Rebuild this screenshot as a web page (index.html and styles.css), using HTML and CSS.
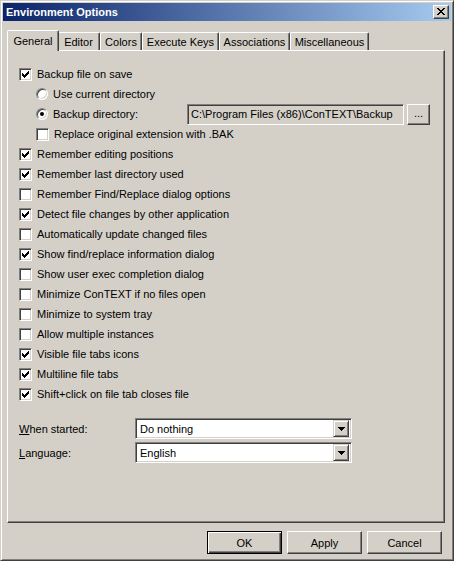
FILE: index.html
```html
<!DOCTYPE html>
<html lang="en">
<head>
    <meta charset="UTF-8">
    <title>Environment Options</title>
    <link rel="stylesheet" href="styles.css">
</head>
<body>
    <div class="window">
        <div class="titlebar">
            <span class="title">Environment Options</span>
            <span class="close-btn">
                <svg width="8" height="7" viewBox="0 0 8 7" shape-rendering="crispEdges"><path fill="#000" d="M0 0h2v1h-2z M6 0h2v1h-2z M1 1h2v1h-2z M5 1h2v1h-2z M2 2h4v1h-4z M3 3h2v1h-2z M2 4h4v1h-4z M1 5h2v1h-2z M5 5h2v1h-2z M0 6h2v1h-2z M6 6h2v1h-2z"/></svg>
            </span>
        </div>

        <div class="tabs">
            <div class="tab active">General</div>
            <div class="tab">Editor</div>
            <div class="tab">Colors</div>
            <div class="tab">Execute Keys</div>
            <div class="tab">Associations</div>
            <div class="tab">Miscellaneous</div>
        </div>

        <div class="panel">
            <div class="row"><span class="check on"></span>Backup file on save</div>
            <div class="row sub"><span class="radio"></span>Use current directory</div>
            <div class="row sub">
                <span class="radio on"></span>
                <span class="dir-label">Backup directory:</span>
                <span class="edit">C:\Program Files (x86)\ConTEXT\Backup</span>
                <span class="btn small">...</span>
            </div>
            <div class="row sub"><span class="check"></span>Replace original extension with .BAK</div>
            <div class="row"><span class="check on"></span>Remember editing positions</div>
            <div class="row"><span class="check on"></span>Remember last directory used</div>
            <div class="row"><span class="check"></span>Remember Find/Replace dialog options</div>
            <div class="row"><span class="check on"></span>Detect file changes by other application</div>
            <div class="row"><span class="check"></span>Automatically update changed files</div>
            <div class="row"><span class="check on"></span>Show find/replace information dialog</div>
            <div class="row"><span class="check"></span>Show user exec completion dialog</div>
            <div class="row"><span class="check"></span>Minimize ConTEXT if no files open</div>
            <div class="row"><span class="check"></span>Minimize to system tray</div>
            <div class="row"><span class="check"></span>Allow multiple instances</div>
            <div class="row"><span class="check on"></span>Visible file tabs icons</div>
            <div class="row"><span class="check on"></span>Multiline file tabs</div>
            <div class="row"><span class="check on"></span>Shift+click on file tab closes file</div>

            <div class="fields">
                <div class="field">
                    <span class="field-label"><u>W</u>hen started:</span>
                    <span class="combo"><span class="combo-text">Do nothing</span><span class="combo-btn"></span></span>
                </div>
                <div class="field">
                    <span class="field-label"><u>L</u>anguage:</span>
                    <span class="combo"><span class="combo-text">English</span><span class="combo-btn"></span></span>
                </div>
            </div>
        </div>

        <div class="actions">
            <span class="btn default">OK</span>
            <span class="btn">Apply</span>
            <span class="btn">Cancel</span>
        </div>
    </div>
</body>
</html>
```

FILE: styles.css
```css
body {
    margin: 0;
    background: #d4d0c8;
    font-family: "Liberation Sans", Arial, sans-serif;
    font-size: 11px;
    color: #000;
}
.window {
    width: 454px;
    height: 561px;
    box-sizing: border-box;
    border: 1px solid;
    border-color: #d4d0c8 #404040 #404040 #d4d0c8;
    box-shadow: inset 1px 1px #fff, inset -1px -1px #808080;
    padding: 2px;
    display: flex;
    flex-direction: column;
}
.titlebar {
    height: 18px;
    flex-shrink: 0;
    display: flex;
    align-items: center;
    padding: 0 2px 0 3px;
    background: linear-gradient(to right, #0a246a, #a6caf0);
}
.title {
    color: #fff;
    font-weight: bold;
}
.close-btn {
    margin-left: auto;
    width: 16px;
    height: 14px;
    box-sizing: border-box;
    border: 1px solid;
    border-color: #fff #404040 #404040 #fff;
    box-shadow: inset -1px -1px #808080;
    background: #d4d0c8;
    display: flex;
    align-items: center;
    justify-content: center;
}
.close-btn svg {
    display: block;
    margin: 0 1px 1px 0;
}

/* tab strip */
.tabs {
    display: grid;
    grid-template-columns: 48px 43px 42px 77px 71px 79px;
    height: 18px;
    margin: 11px 0 0 6px;
    flex-shrink: 0;
}
.tab {
    box-sizing: border-box;
    border: 1px solid;
    border-bottom: none;
    border-color: #fff #404040 #fff #fff;
    border-radius: 2px 2px 0 0;
    box-shadow: inset -1px 0 #808080;
    display: flex;
    align-items: center;
    justify-content: center;
    padding-top: 1px;
    background: #d4d0c8;
}
.tab.active {
    margin: -2px -2px -1px;
    padding-top: 0;
    position: relative;
    z-index: 1;
}

/* page panel */
.panel {
    height: 473px;
    flex-shrink: 0;
    box-sizing: border-box;
    margin: 0 6px 0 4px;
    border: 1px solid;
    border-color: #fff #404040 #404040 #fff;
    box-shadow: inset -1px -1px #808080;
    padding: 13px 0 0 11px;
}
.row {
    display: flex;
    align-items: center;
    height: 20px;
    white-space: nowrap;
}
.row.sub {
    padding-left: 17px;
}
.check {
    width: 13px;
    height: 13px;
    box-sizing: border-box;
    flex-shrink: 0;
    margin-right: 5px;
    border: 1px solid;
    border-color: #808080 #fff #fff #808080;
    box-shadow: inset 1px 1px #404040, inset -1px -1px #d4d0c8;
    background: #fff;
    position: relative;
}
.check.on::after {
    content: "";
    position: absolute;
    left: 2px;
    top: 2px;
    width: 7px;
    height: 7px;
    background: url("data:image/svg+xml,%3Csvg xmlns='http://www.w3.org/2000/svg' width='7' height='7' shape-rendering='crispEdges'%3E%3Cpath d='M6 0h1v1h-1z M5 1h2v1h-2z M0 2h1v1h-1z M4 2h3v1h-3z M0 3h2v1h-2z M3 3h3v1h-3z M0 4h5v1h-5z M1 5h3v1h-3z M2 6h1v1h-1z'/%3E%3C/svg%3E");
}
.radio {
    width: 12px;
    height: 12px;
    box-sizing: border-box;
    flex-shrink: 0;
    margin-right: 5px;
    border-radius: 50%;
    border: 1px solid;
    border-color: #808080 #fff #fff #808080;
    box-shadow: inset 1px 1px #404040, inset -1px -1px #d4d0c8;
    background: #fff;
    position: relative;
}
.radio.on::after {
    content: "";
    position: absolute;
    left: 3px;
    top: 3px;
    width: 4px;
    height: 4px;
    border-radius: 50%;
    background: #000;
}
.dir-label {
    width: 134px;
    flex-shrink: 0;
}
.edit {
    width: 217px;
    height: 21px;
    box-sizing: border-box;
    border: 1px solid;
    border-color: #808080 #fff #fff #808080;
    box-shadow: inset 1px 1px #404040, inset -1px -1px #d4d0c8;
    padding: 0 3px;
    display: flex;
    align-items: center;
    margin-right: 3px;
}

/* combos */
.fields {
    margin-top: 14px;
    display: flex;
    flex-direction: column;
    gap: 3px;
}
.field {
    display: flex;
    align-items: center;
}
.field-label {
    width: 116px;
}
.combo {
    width: 217px;
    height: 21px;
    box-sizing: border-box;
    border: 1px solid;
    border-color: #808080 #fff #fff #808080;
    box-shadow: inset 1px 1px #404040, inset -1px -1px #d4d0c8;
    padding: 2px;
    background: #fff;
    display: flex;
    align-items: center;
}
.combo-text {
    flex: 1;
    padding-left: 2px;
}
.combo-btn {
    width: 16px;
    height: 17px;
    box-sizing: border-box;
    border: 1px solid;
    border-color: #d4d0c8 #404040 #404040 #d4d0c8;
    box-shadow: inset 1px 1px #fff, inset -1px -1px #808080;
    background: #d4d0c8 url("data:image/svg+xml,%3Csvg xmlns='http://www.w3.org/2000/svg' width='7' height='4' shape-rendering='crispEdges'%3E%3Cpath d='M0 0h7v1h-7z M1 1h5v1h-5z M2 2h3v1h-3z M3 3h1v1h-1z'/%3E%3C/svg%3E") no-repeat center;
}

/* buttons */
.actions {
    display: flex;
    justify-content: flex-end;
    gap: 5px;
    margin-top: 8px;
    padding-right: 9px;
}
.btn {
    width: 75px;
    height: 23px;
    box-sizing: border-box;
    border: 1px solid;
    border-color: #fff #404040 #404040 #fff;
    box-shadow: inset -1px -1px #808080;
    background: #d4d0c8;
    display: flex;
    align-items: center;
    justify-content: center;
}
.btn.default {
    border-color: #000;
    box-shadow: inset 1px 1px #fff, inset -1px -1px #404040, inset -2px -2px #808080;
}
.btn.small {
    width: 23px;
    height: 21px;
    padding-bottom: 3px;
}
```
